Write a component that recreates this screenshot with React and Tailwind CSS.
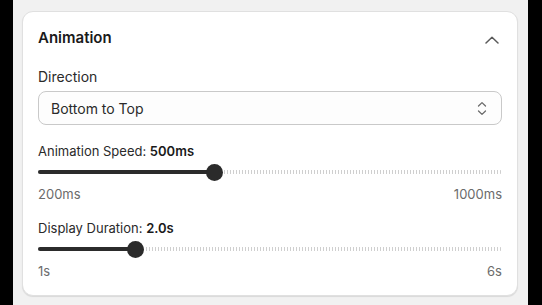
import React from "react";

function Slider({ value, min, max }) {
  const pct = (value - min) / (max - min);
  const thumb = 17;
  const left = `calc(${pct} * (100% - ${thumb}px))`;
  const center = `calc(${pct} * (100% - ${thumb}px) + ${thumb / 2}px)`;
  return (
    <div className="relative h-[20px] w-full">
      <div className="absolute right-0 top-[8px] h-[4px] w-full rounded-full bg-[repeating-linear-gradient(90deg,#cfcfcf_0_1px,transparent_1px_3px)]" />
      <div
        className="absolute left-0 top-[8px] h-[4px] rounded-full bg-[#2b2b2b]"
        style={{ width: center }}
      />
      <div
        className="absolute top-[1.5px] h-[17px] w-[17px] rounded-full bg-[#2b2b2b]"
        style={{ left }}
      />
    </div>
  );
}

export default function App() {
  return (
    <div className="flex h-[305px] w-[542px] bg-black" style={{ fontFamily: "Inter, 'Noto Sans', sans-serif" }}>
      <div className="ml-[13px] h-full w-[515px] bg-[#f1f1f1] pl-[9px] pr-[10px] pt-[11px]">
        <div className="flex h-[285px] flex-col rounded-[11px] border border-[#e0e0e0] bg-white px-[15px] pt-[15px] shadow-[0_1px_1px_rgba(0,0,0,0.1)]">
          <div className="flex h-[22px] items-center justify-between">
            <div className="text-[15px] font-semibold leading-[22px] text-[#1a1a1a]">Animation</div>
            <svg width="14" height="8" viewBox="0 0 14 8" className="mr-[3px] translate-y-[2px]">
              <path d="M1 7 L7 1.2 L13 7" fill="none" stroke="#5a5a5a" strokeWidth="1.5" strokeLinecap="round" strokeLinejoin="round" />
            </svg>
          </div>
          <div className="mt-[18px] text-[14px] leading-[20px] text-[#2a2a2a]">Direction</div>
          <div className="mt-[4px] flex h-[34px] items-center justify-between rounded-[8px] border border-[#c9c9c9] bg-[#fdfdfd] pl-[12px] pr-[14px]">
            <span className="text-[14px] text-[#2a2a2a]">Bottom to Top</span>
            <svg width="10" height="15" viewBox="0 0 10 15">
              <path d="M1.5 5 L5 1.6 L8.5 5" fill="none" stroke="#6a6a6a" strokeWidth="1.3" strokeLinecap="round" strokeLinejoin="round" />
              <path d="M1.5 10 L5 13.4 L8.5 10" fill="none" stroke="#6a6a6a" strokeWidth="1.3" strokeLinecap="round" strokeLinejoin="round" />
            </svg>
          </div>
          <div className="mt-[16px] text-[13px] leading-[20px] text-[#2a2a2a]">
            Animation Speed: <span className="font-semibold text-[#1a1a1a]">500ms</span>
          </div>
          <div className="mt-[1px]">
            <Slider value={500} min={200} max={1000} />
          </div>
          <div className="mt-[2px] flex justify-between text-[13px] leading-[20px] text-[#6b6b6b]">
            <span>200ms</span>
            <span>1000ms</span>
          </div>
          <div className="mt-[14px] text-[13px] leading-[20px] text-[#2a2a2a]">
            Display Duration: <span className="font-semibold text-[#1a1a1a]">2.0s</span>
          </div>
          <div className="mt-[1px]">
            <Slider value={2} min={1} max={6} />
          </div>
          <div className="mt-[2px] flex justify-between text-[13px] leading-[20px] text-[#6b6b6b]">
            <span>1s</span>
            <span>6s</span>
          </div>
        </div>
      </div>
    </div>
  );
}
